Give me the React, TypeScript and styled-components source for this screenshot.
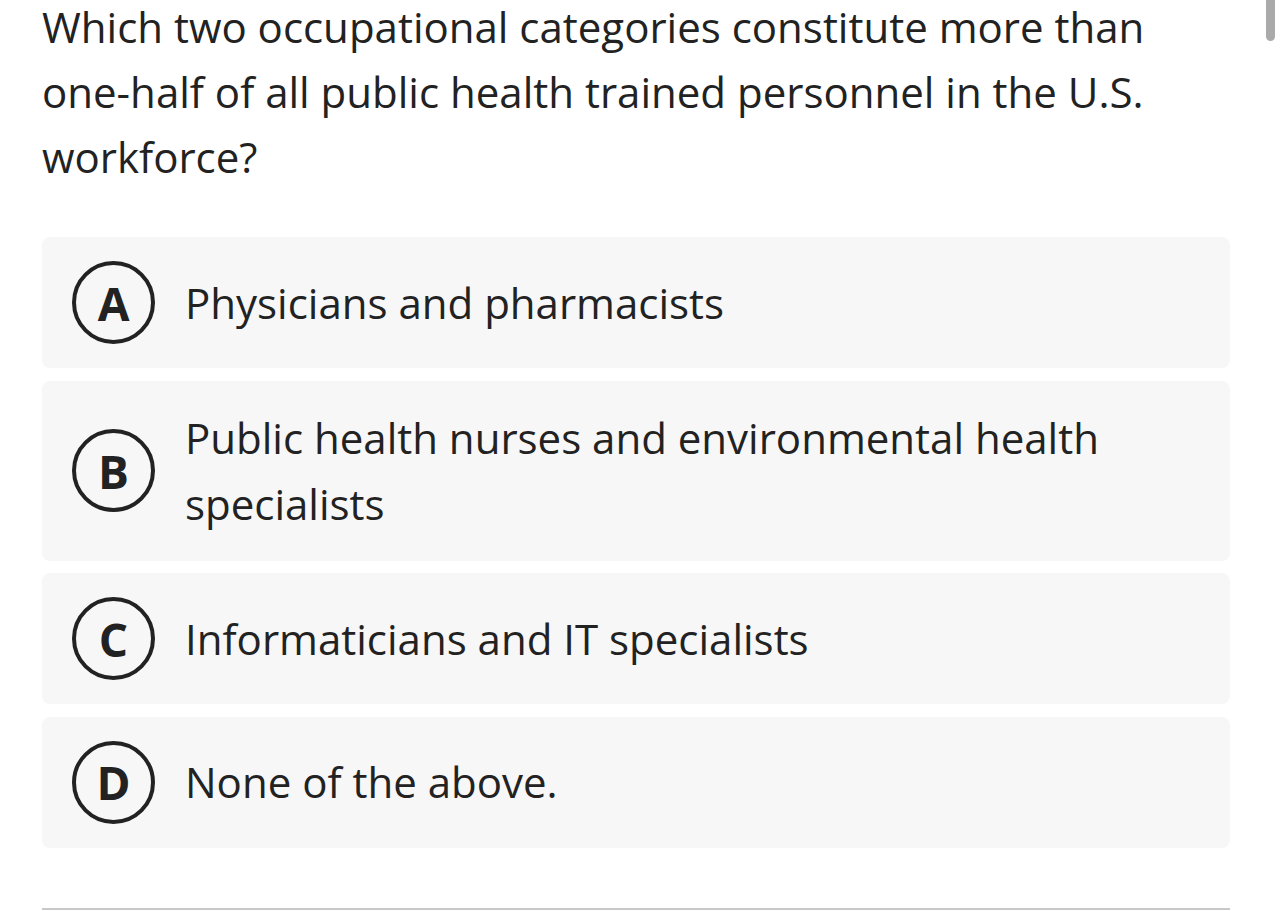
import styled, { createGlobalStyle } from "styled-components";

const GlobalStyle = createGlobalStyle`
  html, body {
    margin: 0;
    padding: 0;
    background: #ffffff;
    overflow: hidden;
  }
  body {
    font-family: "Open Sans", "Noto Sans", sans-serif;
    color: #222222;
  }
`;

const Page = styled.div`
  position: relative;
  width: 1284px;
  height: 911px;
  overflow: hidden;
  box-sizing: border-box;
  padding: 0 54px 0 42px;
`;

const Question = styled.p`
  margin: -6px 0 0 0;
  font-size: 42px;
  line-height: 65px;
  font-weight: 400;
  color: #222222;
`;

const OptionList = styled.div`
  display: flex;
  flex-direction: column;
  gap: 12.5px;
  margin-top: 48px;
`;

const OptionCard = styled.div`
  display: flex;
  align-items: center;
  gap: 30px;
  padding: 24px 30px;
  background: #f7f7f7;
  border-radius: 8px;
`;

const Badge = styled.div`
  flex: none;
  width: 83px;
  height: 83px;
  box-sizing: border-box;
  border: 4.5px solid #222222;
  border-radius: 50%;
  display: flex;
  align-items: center;
  justify-content: center;
  font-size: 46px;
  font-weight: 700;
  line-height: 1;
  color: #222222;
`;

const OptionText = styled.div`
  font-size: 42px;
  line-height: 66px;
  color: #222222;
`;

const Divider = styled.div`
  margin-top: 60px;
  height: 2px;
  background: #c8c8c8;
`;

const Scrollbar = styled.div`
  position: absolute;
  top: 0;
  right: 9px;
  width: 9px;
  height: 41px;
  background: #aaaaaa;
  border-radius: 0 0 5px 5px;
`;

const options = [
  { letter: "A", text: "Physicians and pharmacists" },
  { letter: "B", text: "Public health nurses and environmental health specialists" },
  { letter: "C", text: "Informaticians and IT specialists" },
  { letter: "D", text: "None of the above." },
];

export default function App() {
  return (
    <>
      <GlobalStyle />
      <Page>
        <Question>
          Which two occupational categories constitute more than one-half of
          all public health trained personnel in the U.S. workforce?
        </Question>
        <OptionList>
          {options.map((o) => (
            <OptionCard key={o.letter}>
              <Badge>{o.letter}</Badge>
              <OptionText>{o.text}</OptionText>
            </OptionCard>
          ))}
        </OptionList>
        <Divider />
        <Scrollbar />
      </Page>
    </>
  );
}
